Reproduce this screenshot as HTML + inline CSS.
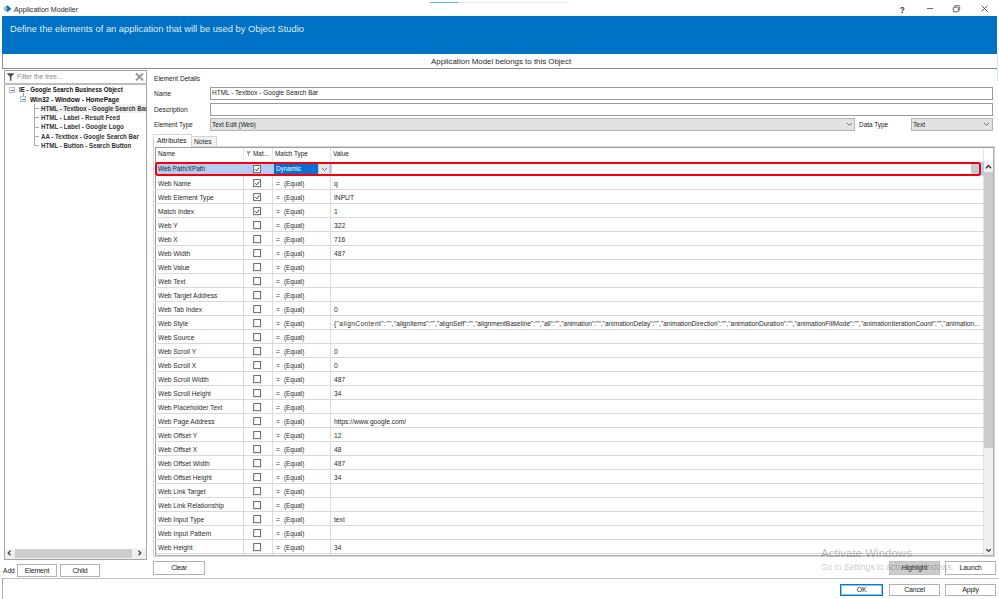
<!DOCTYPE html>
<html><head><meta charset="utf-8"><title>Application Modeller</title>
<style>
*{box-sizing:border-box;margin:0;padding:0}
html,body{width:999px;height:599px;overflow:hidden;background:#fff}
body{position:relative;font-family:"Liberation Sans",sans-serif;font-size:7px;color:#222;line-height:1}
.a{position:absolute;white-space:nowrap}
.t{position:absolute;white-space:nowrap;line-height:10px;height:10px;transform-origin:0 50%;transform:scaleX(var(--s,.94))}
#banner{left:2px;top:16px;width:995px;height:38px;background:#0072c6}
#banner span{position:absolute;left:8px;top:6.6px;font-size:9.6px;color:rgba(255,255,255,.9);line-height:12px;transform-origin:0 50%;transform:scaleX(.972)}
#strip{left:2px;top:54px;width:995px;height:15px;border-left:1px solid #8a8a8a;border-bottom:1px solid #8a8a8a;background:#fff}
.box{position:absolute;border:1px solid #aaa;background:#fff}
.btn{position:absolute;border:1px solid #b2b2b2;background:#fff;text-align:center;font-size:7px;letter-spacing:-.2px;line-height:11px;color:#222}
.row{position:absolute;left:155px;width:829px;height:14px;border-top:1px solid #d9d9d9}
.row span{position:absolute;top:2.5px;line-height:10px;white-space:nowrap;font-size:6.8px;color:#2a2a2a;transform-origin:0 50%;transform:scaleX(.95)}
.row .c1{left:3px;transform:scaleX(.975)}.c3{left:120.7px}.row .c3b{left:128.7px;transform:scaleX(.93)}.row .c4{left:178.7px;transform:scaleX(.98)}
.cb{position:absolute;left:254px;width:7px;height:7px;border:1px solid #555;background:#fff}
.cb svg{position:absolute;left:-1px;top:-1px}
.tree{font-size:7px;font-weight:bold;color:#333}
.tl{position:absolute;background:#999}
</style></head><body>
<!-- title bar -->
<svg class="a" style="left:3px;top:5px" width="9" height="8" viewBox="0 0 9 8"><path d="M0.4 3.7 L1.8 1.2 L4.2 1.2 L4.2 6.3 L1.8 6.3 Z" fill="#8fc0e8"/><path d="M3.2 1.6 L4.6 0.3 L8.4 3.9 L4.6 7 L3.2 5.9 L4.3 3.8 Z" fill="#0a72c4"/></svg>
<div class="t" style="left:14px;top:4.5px;font-size:7.3px;color:#2a2a2a;--s:.975">Application Modeller</div>
<div class="a" style="left:430px;top:2px;width:28px;height:1px;background:#6aa6e0"></div>
<div class="a" style="left:458px;top:2px;width:112px;height:1px;background:#e8e8e8"></div>
<div class="t" style="left:900px;top:5px;font-size:9.5px;font-weight:bold;color:#2a2a2a;--s:.8">?</div>
<div class="a" style="left:927px;top:8px;width:6px;height:1px;background:#6a6a6a"></div>
<svg class="a" style="left:952px;top:5px" width="9" height="8" viewBox="0 0 9 8"><path d="M2.6 2.2 L2.6 1 Q2.6 0.6 3 0.6 L7.2 0.6 Q7.7 0.6 7.7 1.1 L7.7 4.8 Q7.7 5.3 7.2 5.3 L6.4 5.3" fill="none" stroke="#555" stroke-width="0.8"/><rect x="1.3" y="2.2" width="5" height="4.6" rx="0.7" fill="none" stroke="#444" stroke-width="0.85"/></svg>
<svg class="a" style="left:981px;top:5px" width="7" height="7" viewBox="0 0 7 7"><path d="M0.5 0.5 L6.5 6.5 M6.5 0.5 L0.5 6.5" stroke="#444" stroke-width="0.9" fill="none"/></svg>

<div id="banner" class="a"><span>Define the elements of an application that will be used by Object Studio</span></div>
<div id="strip" class="a"></div>
<div class="t" style="left:430.5px;top:56.6px;font-size:7.8px;color:#2a2a2a;--s:1.01">Application Model belongs to this Object</div>

<div class="a" style="left:997px;top:54px;width:1px;height:27px;background:#d4e4f6"></div>
<!-- left panel -->
<div class="box" style="left:4px;top:70px;width:143px;height:14px;border-color:#a4a4a4 #a4a4a4 #bdbdbd #a4a4a4"></div>
<svg class="a" style="left:6px;top:72px" width="10" height="10" viewBox="0 0 10 10"><path d="M0.7 1.2 L8.5 1.2 L5.4 4.8 L5.4 8.8 L3.9 8.8 L3.9 4.8 Z" fill="#505050"/></svg>
<div class="t" style="left:17.3px;top:71.8px;font-size:7px;color:#8a8a8a;--s:.966">Filter the tree...</div>
<svg class="a" style="left:135px;top:72px" width="9" height="9" viewBox="0 0 9 9"><path d="M1 1.3 L8 8.3 M8 1.3 L1 8.3" stroke="#949494" stroke-width="1.9" fill="none"/></svg>
<div class="box" style="left:4px;top:84px;width:143px;height:476px;border-color:#bdbdbd #a4a4a4 #a4a4a4 #a4a4a4"></div>

<div class="a" style="left:40px;top:104px;width:106px;height:9px;background:#f0f0f0"></div>
<div class="box" style="left:9px;top:87px;width:6px;height:6px;border-color:#b4bfce;background:#f6f8fb"></div><div class="a" style="left:11px;top:90px;width:3px;height:1px;background:#5a76c0"></div>
<div class="box" style="left:20px;top:96px;width:6px;height:6px;border-color:#b4bfce;background:#f6f8fb"></div><div class="a" style="left:22px;top:99px;width:3px;height:1px;background:#5a76c0"></div>
<div class="tl" style="left:23px;top:93px;width:1px;height:3px"></div>
<div class="tl" style="left:34px;top:104px;width:1px;height:42px;background:#aaa"></div>
<div class="tl" style="left:34px;top:108px;width:5px;height:1px;background:#aaa"></div>
<div class="tl" style="left:34px;top:117px;width:5px;height:1px;background:#aaa"></div>
<div class="tl" style="left:34px;top:127px;width:5px;height:1px;background:#aaa"></div>
<div class="tl" style="left:34px;top:136px;width:5px;height:1px;background:#aaa"></div>
<div class="tl" style="left:34px;top:145px;width:5px;height:1px;background:#aaa"></div>
<div class="t tree" style="left:19px;top:85px;color:#111;--s:0.871">IE - Google Search Business Object</div>
<div class="t tree" style="left:30px;top:95px;color:#111;--s:0.931">Win32 - Window - HomePage</div>
<div class="t tree" style="left:41px;top:104px;width:120px;overflow:hidden;--s:.88">HTML - Textbox - Google Search Bar</div>
<div class="t tree" style="left:41px;top:113px;--s:0.88">HTML - Label - Result Feed</div>
<div class="t tree" style="left:41px;top:122px;--s:0.889">HTML - Label - Google Logo</div>
<div class="t tree" style="left:41px;top:132px;--s:0.876">AA - Textbox - Google Search Bar</div>
<div class="t tree" style="left:41px;top:141px;--s:0.885">HTML - Button - Search Button</div>

<!-- h scrollbar -->
<div class="a" style="left:5px;top:549px;width:141px;height:10px;background:#f0f0f0"></div>
<div class="a" style="left:15px;top:549px;width:117px;height:9px;background:#cdcdcd"></div>
<svg class="a" style="left:7px;top:550px" width="5" height="6" viewBox="0 0 5 6"><path d="M3.5 0.7 L1.2 3 L3.5 5.3" stroke="#444" stroke-width="1.3" fill="none"/></svg>
<svg class="a" style="left:137px;top:550px" width="5" height="6" viewBox="0 0 5 6"><path d="M1.5 0.7 L3.8 3 L1.5 5.3" stroke="#444" stroke-width="1.3" fill="none"/></svg>

<div class="t" style="left:3.3px;top:566px;font-size:7px">Add</div>
<div class="btn" style="left:17px;top:564px;width:40px;height:13px">Element</div>
<div class="btn" style="left:60px;top:564px;width:40px;height:13px">Child</div>
<div class="a" style="left:2px;top:578px;width:997px;height:1px;background:#c4c4c4"></div>
<div class="a" style="left:2px;top:578px;width:1px;height:21px;background:#aaa"></div>

<!-- right details -->
<div class="t" style="left:154px;top:73.5px;font-size:7px;--s:.939">Element Details</div>
<div class="t" style="left:154px;top:88.7px;font-size:7px;--s:.917">Name</div>
<div class="t" style="left:154px;top:104.5px;font-size:7px;--s:.962">Description</div>
<div class="t" style="left:154px;top:120.3px;font-size:7px;--s:.908">Element Type</div>
<div class="box" style="left:210px;top:87px;width:783px;height:13px;border-color:#9a9a9a"></div>
<div class="t" style="left:212px;top:88px;font-size:7px;--s:.926">HTML - Textbox - Google Search Bar</div>
<div class="box" style="left:210px;top:103px;width:783px;height:13px;border-color:#9a9a9a"></div>
<div class="box" style="left:210px;top:118px;width:645px;height:13px;border-color:#b4b4b4;background:#e2e2e2"></div>
<div class="t" style="left:212px;top:120px;font-size:7px;--s:0.92">Text Edit (Web)</div>
<svg class="a" style="left:846px;top:122px" width="7" height="5" viewBox="0 0 7 5"><path d="M1 1 L3.5 3.4 L6 1" stroke="#505050" stroke-width="0.8" fill="none"/></svg>
<div class="t" style="left:858.5px;top:120px;font-size:7px;--s:.918">Data Type</div>
<div class="box" style="left:911px;top:118px;width:82px;height:13px;border-color:#b4b4b4;background:#e2e2e2"></div>
<div class="t" style="left:913px;top:120px;font-size:7px">Text</div>
<svg class="a" style="left:983px;top:122px" width="7" height="5" viewBox="0 0 7 5"><path d="M1 1 L3.5 3.4 L6 1" stroke="#505050" stroke-width="0.8" fill="none"/></svg>

<!-- tabs -->
<div class="box" style="left:190px;top:136px;width:27px;height:11px;border-color:#d5d5d5;background:#f2f2f2"></div>
<div class="t" style="left:194px;top:137px;font-size:7px;--s:.96">Notes</div>
<div class="box" style="left:153px;top:146px;width:842px;height:411px;border-color:#d5d5d5"></div>
<div class="box" style="left:153px;top:134px;width:39px;height:13px;border-color:#d5d5d5;border-bottom:none"></div>
<div class="t" style="left:157px;top:135.5px;font-size:7px;--s:1">Attributes</div>

<!-- table -->
<div class="box" style="left:155px;top:147px;width:839px;height:409px;border-color:#a0a0a0 #b0b0b0 #b0b0b0 #999"></div>
<div class="t" style="left:158px;top:149px;font-size:6.8px">Name</div>
<svg class="a" style="left:246px;top:151px" width="6" height="6" viewBox="0 0 6 6"><path d="M0.1 0.2 L5.1 0.2 L3 3 L3 5.2 L2.2 5.2 L2.2 3 Z" fill="#9a9a9a"/></svg>
<div class="t" style="left:253px;top:149px;font-size:6.8px">Mat...</div>
<div class="t" style="left:275px;top:149px;font-size:6.8px">Match Type</div>
<div class="t" style="left:333px;top:149px;font-size:6.8px">Value</div>
<div class="a" style="left:243px;top:148px;width:1px;height:13px;background:#e3e3e3"></div>
<div class="a" style="left:272px;top:148px;width:1px;height:13px;background:#e3e3e3"></div>
<div class="a" style="left:330px;top:148px;width:1px;height:13px;background:#e3e3e3"></div>
<!-- col lines -->
<div class="a" style="left:243px;top:162px;width:1px;height:393px;background:#dcdcdc"></div>
<div class="a" style="left:272px;top:162px;width:1px;height:393px;background:#dcdcdc"></div>
<div class="a" style="left:330px;top:162px;width:1px;height:393px;background:#dcdcdc"></div>
<div class="a" style="left:983px;top:148px;width:1px;height:407px;background:#e3e3e3"></div>

<!-- selected row -->
<div class="a" style="left:156px;top:162px;width:176px;height:14px;background:#b4cdf0"></div>
<div class="a" style="left:971px;top:162px;width:13px;height:14px;background:#b4cdf0"></div>
<div class="t" style="left:158px;top:164px;font-size:6.8px">Web Path/XPath</div>
<svg class="a" style="left:253px;top:165px" width="10" height="10" viewBox="0 0 10 10"><rect x="0.7" y="0.6" width="6.9" height="7.1" fill="#fff" stroke="#555" stroke-width="0.9"/><path d="M2.3 4.3 L3.7 5.9 L6.2 2.5" fill="none" stroke="#3a3a3a" stroke-width="1"/></svg>

<div class="a" style="left:274px;top:164px;width:44px;height:10px;background:#0a6fd0"></div>
<div class="t" style="left:276px;top:164px;font-size:6.8px;color:#fff">Dynamic</div>
<div class="a" style="left:319px;top:164px;width:10px;height:11px;background:#e6e6e6"></div><svg class="a" style="left:321px;top:167px" width="7" height="5" viewBox="0 0 7 5"><path d="M1 1 L3.5 3.4 L6 1" stroke="#505050" stroke-width="0.8" fill="none"/></svg>
<div class="a" style="left:972px;top:164px;width:6px;height:10px;background:#ccc"></div>
<div class="t" style="left:974px;top:166px;font-size:4px;color:#555">...</div>
<div class="row" style="top:175px"><span class="c1">Web Name</span><span class="c3">=</span><span class="c3b">(Equal)</span><span class="c4">q</span></div>
<svg class="a" style="left:253px;top:179px" width="10" height="10" viewBox="0 0 10 10"><rect x="0.7" y="0.6" width="6.9" height="7.1" fill="#fff" stroke="#555" stroke-width="0.9"/><path d="M2.3 4.3 L3.7 5.9 L6.2 2.5" fill="none" stroke="#3a3a3a" stroke-width="1"/></svg>
<div class="row" style="top:189px"><span class="c1">Web Element Type</span><span class="c3">=</span><span class="c3b">(Equal)</span><span class="c4">INPUT</span></div>
<svg class="a" style="left:253px;top:193px" width="10" height="10" viewBox="0 0 10 10"><rect x="0.7" y="0.6" width="6.9" height="7.1" fill="#fff" stroke="#555" stroke-width="0.9"/><path d="M2.3 4.3 L3.7 5.9 L6.2 2.5" fill="none" stroke="#3a3a3a" stroke-width="1"/></svg>
<div class="row" style="top:203px"><span class="c1">Match Index</span><span class="c3">=</span><span class="c3b">(Equal)</span><span class="c4">1</span></div>
<svg class="a" style="left:253px;top:207px" width="10" height="10" viewBox="0 0 10 10"><rect x="0.7" y="0.6" width="6.9" height="7.1" fill="#fff" stroke="#555" stroke-width="0.9"/><path d="M2.3 4.3 L3.7 5.9 L6.2 2.5" fill="none" stroke="#3a3a3a" stroke-width="1"/></svg>
<div class="row" style="top:217px"><span class="c1">Web Y</span><span class="c3">=</span><span class="c3b">(Equal)</span><span class="c4">322</span></div>
<svg class="a" style="left:253px;top:221px" width="10" height="10" viewBox="0 0 10 10"><rect x="0.7" y="0.6" width="6.9" height="7.1" fill="#fff" stroke="#555" stroke-width="0.9"/></svg>
<div class="row" style="top:231px"><span class="c1">Web X</span><span class="c3">=</span><span class="c3b">(Equal)</span><span class="c4">716</span></div>
<svg class="a" style="left:253px;top:235px" width="10" height="10" viewBox="0 0 10 10"><rect x="0.7" y="0.6" width="6.9" height="7.1" fill="#fff" stroke="#555" stroke-width="0.9"/></svg>
<div class="row" style="top:245px"><span class="c1">Web Width</span><span class="c3">=</span><span class="c3b">(Equal)</span><span class="c4">487</span></div>
<svg class="a" style="left:253px;top:249px" width="10" height="10" viewBox="0 0 10 10"><rect x="0.7" y="0.6" width="6.9" height="7.1" fill="#fff" stroke="#555" stroke-width="0.9"/></svg>
<div class="row" style="top:259px"><span class="c1">Web Value</span><span class="c3">=</span><span class="c3b">(Equal)</span><span class="c4"></span></div>
<svg class="a" style="left:253px;top:263px" width="10" height="10" viewBox="0 0 10 10"><rect x="0.7" y="0.6" width="6.9" height="7.1" fill="#fff" stroke="#555" stroke-width="0.9"/></svg>
<div class="row" style="top:273px"><span class="c1">Web Text</span><span class="c3">=</span><span class="c3b">(Equal)</span><span class="c4"></span></div>
<svg class="a" style="left:253px;top:277px" width="10" height="10" viewBox="0 0 10 10"><rect x="0.7" y="0.6" width="6.9" height="7.1" fill="#fff" stroke="#555" stroke-width="0.9"/></svg>
<div class="row" style="top:287px"><span class="c1">Web Target Address</span><span class="c3">=</span><span class="c3b">(Equal)</span><span class="c4"></span></div>
<svg class="a" style="left:253px;top:291px" width="10" height="10" viewBox="0 0 10 10"><rect x="0.7" y="0.6" width="6.9" height="7.1" fill="#fff" stroke="#555" stroke-width="0.9"/></svg>
<div class="row" style="top:301px"><span class="c1">Web Tab Index</span><span class="c3">=</span><span class="c3b">(Equal)</span><span class="c4">0</span></div>
<svg class="a" style="left:253px;top:305px" width="10" height="10" viewBox="0 0 10 10"><rect x="0.7" y="0.6" width="6.9" height="7.1" fill="#fff" stroke="#555" stroke-width="0.9"/></svg>
<div class="row" style="top:315px"><span class="c1">Web Style</span><span class="c3">=</span><span class="c3b">(Equal)</span><span class="c4" style="transform:scaleX(.966)"><b style="font-weight:normal;letter-spacing:.43px">{&quot;alignContent&quot;:&quot;&quot;,</b>&quot;alignItems&quot;:&quot;&quot;,&quot;alignSelf&quot;:&quot;&quot;,&quot;alignmentBaseline&quot;:&quot;&quot;,&quot;all&quot;:&quot;&quot;,&quot;animation&quot;:&quot;&quot;,&quot;animationDelay&quot;:&quot;&quot;,&quot;animationDirection&quot;:&quot;&quot;,&quot;animationDuration&quot;:&quot;&quot;,&quot;animationFillMode&quot;:&quot;&quot;,&quot;animationIterationCount&quot;:&quot;&quot;,&quot;animation...</span></div>
<svg class="a" style="left:253px;top:319px" width="10" height="10" viewBox="0 0 10 10"><rect x="0.7" y="0.6" width="6.9" height="7.1" fill="#fff" stroke="#555" stroke-width="0.9"/></svg>
<div class="row" style="top:329px"><span class="c1">Web Source</span><span class="c3">=</span><span class="c3b">(Equal)</span><span class="c4"></span></div>
<svg class="a" style="left:253px;top:333px" width="10" height="10" viewBox="0 0 10 10"><rect x="0.7" y="0.6" width="6.9" height="7.1" fill="#fff" stroke="#555" stroke-width="0.9"/></svg>
<div class="row" style="top:343px"><span class="c1">Web Scroll Y</span><span class="c3">=</span><span class="c3b">(Equal)</span><span class="c4">0</span></div>
<svg class="a" style="left:253px;top:347px" width="10" height="10" viewBox="0 0 10 10"><rect x="0.7" y="0.6" width="6.9" height="7.1" fill="#fff" stroke="#555" stroke-width="0.9"/></svg>
<div class="row" style="top:357px"><span class="c1">Web Scroll X</span><span class="c3">=</span><span class="c3b">(Equal)</span><span class="c4">0</span></div>
<svg class="a" style="left:253px;top:361px" width="10" height="10" viewBox="0 0 10 10"><rect x="0.7" y="0.6" width="6.9" height="7.1" fill="#fff" stroke="#555" stroke-width="0.9"/></svg>
<div class="row" style="top:371px"><span class="c1">Web Scroll Width</span><span class="c3">=</span><span class="c3b">(Equal)</span><span class="c4">487</span></div>
<svg class="a" style="left:253px;top:375px" width="10" height="10" viewBox="0 0 10 10"><rect x="0.7" y="0.6" width="6.9" height="7.1" fill="#fff" stroke="#555" stroke-width="0.9"/></svg>
<div class="row" style="top:385px"><span class="c1">Web Scroll Height</span><span class="c3">=</span><span class="c3b">(Equal)</span><span class="c4">34</span></div>
<svg class="a" style="left:253px;top:389px" width="10" height="10" viewBox="0 0 10 10"><rect x="0.7" y="0.6" width="6.9" height="7.1" fill="#fff" stroke="#555" stroke-width="0.9"/></svg>
<div class="row" style="top:399px"><span class="c1">Web Placeholder Text</span><span class="c3">=</span><span class="c3b">(Equal)</span><span class="c4"></span></div>
<svg class="a" style="left:253px;top:403px" width="10" height="10" viewBox="0 0 10 10"><rect x="0.7" y="0.6" width="6.9" height="7.1" fill="#fff" stroke="#555" stroke-width="0.9"/></svg>
<div class="row" style="top:413px"><span class="c1">Web Page Address</span><span class="c3">=</span><span class="c3b">(Equal)</span><span class="c4">https://www.google.com/</span></div>
<svg class="a" style="left:253px;top:417px" width="10" height="10" viewBox="0 0 10 10"><rect x="0.7" y="0.6" width="6.9" height="7.1" fill="#fff" stroke="#555" stroke-width="0.9"/></svg>
<div class="row" style="top:427px"><span class="c1">Web Offset Y</span><span class="c3">=</span><span class="c3b">(Equal)</span><span class="c4">12</span></div>
<svg class="a" style="left:253px;top:431px" width="10" height="10" viewBox="0 0 10 10"><rect x="0.7" y="0.6" width="6.9" height="7.1" fill="#fff" stroke="#555" stroke-width="0.9"/></svg>
<div class="row" style="top:441px"><span class="c1">Web Offset X</span><span class="c3">=</span><span class="c3b">(Equal)</span><span class="c4">48</span></div>
<svg class="a" style="left:253px;top:445px" width="10" height="10" viewBox="0 0 10 10"><rect x="0.7" y="0.6" width="6.9" height="7.1" fill="#fff" stroke="#555" stroke-width="0.9"/></svg>
<div class="row" style="top:455px"><span class="c1">Web Offset Width</span><span class="c3">=</span><span class="c3b">(Equal)</span><span class="c4">487</span></div>
<svg class="a" style="left:253px;top:459px" width="10" height="10" viewBox="0 0 10 10"><rect x="0.7" y="0.6" width="6.9" height="7.1" fill="#fff" stroke="#555" stroke-width="0.9"/></svg>
<div class="row" style="top:469px"><span class="c1">Web Offset Height</span><span class="c3">=</span><span class="c3b">(Equal)</span><span class="c4">34</span></div>
<svg class="a" style="left:253px;top:473px" width="10" height="10" viewBox="0 0 10 10"><rect x="0.7" y="0.6" width="6.9" height="7.1" fill="#fff" stroke="#555" stroke-width="0.9"/></svg>
<div class="row" style="top:483px"><span class="c1">Web Link Target</span><span class="c3">=</span><span class="c3b">(Equal)</span><span class="c4"></span></div>
<svg class="a" style="left:253px;top:487px" width="10" height="10" viewBox="0 0 10 10"><rect x="0.7" y="0.6" width="6.9" height="7.1" fill="#fff" stroke="#555" stroke-width="0.9"/></svg>
<div class="row" style="top:497px"><span class="c1">Web Link Relationship</span><span class="c3">=</span><span class="c3b">(Equal)</span><span class="c4"></span></div>
<svg class="a" style="left:253px;top:501px" width="10" height="10" viewBox="0 0 10 10"><rect x="0.7" y="0.6" width="6.9" height="7.1" fill="#fff" stroke="#555" stroke-width="0.9"/></svg>
<div class="row" style="top:511px"><span class="c1">Web Input Type</span><span class="c3">=</span><span class="c3b">(Equal)</span><span class="c4">text</span></div>
<svg class="a" style="left:253px;top:515px" width="10" height="10" viewBox="0 0 10 10"><rect x="0.7" y="0.6" width="6.9" height="7.1" fill="#fff" stroke="#555" stroke-width="0.9"/></svg>
<div class="row" style="top:525px"><span class="c1">Web Input Pattern</span><span class="c3">=</span><span class="c3b">(Equal)</span><span class="c4"></span></div>
<svg class="a" style="left:253px;top:529px" width="10" height="10" viewBox="0 0 10 10"><rect x="0.7" y="0.6" width="6.9" height="7.1" fill="#fff" stroke="#555" stroke-width="0.9"/></svg>
<div class="row" style="top:539px"><span class="c1">Web Height</span><span class="c3">=</span><span class="c3b">(Equal)</span><span class="c4">34</span></div>
<svg class="a" style="left:253px;top:543px" width="10" height="10" viewBox="0 0 10 10"><rect x="0.7" y="0.6" width="6.9" height="7.1" fill="#fff" stroke="#555" stroke-width="0.9"/></svg>
<div class="a" style="left:156px;top:553px;width:828px;height:1px;background:#d9d9d9"></div><!-- red highlight -->
<div class="a" style="left:155px;top:162px;width:826px;height:14px;border:2px solid #f4000c;border-radius:3px"></div>
<!-- v scrollbar -->
<div class="a" style="left:984px;top:162px;width:9px;height:393px;background:#f0f0f0"></div>
<div class="a" style="left:984px;top:172px;width:9px;height:276px;background:#cbcbcb"></div>
<svg class="a" style="left:985px;top:164px" width="7" height="5" viewBox="0 0 7 5"><path d="M1 4.2 L3.5 1.6 L6 4.2" stroke="#333" stroke-width="1.4" fill="none"/></svg>
<svg class="a" style="left:985px;top:548px" width="7" height="5" viewBox="0 0 7 5"><path d="M1.2 1.2 L3.5 3.5 L5.8 1.2" stroke="#333" stroke-width="1.2" fill="none"/></svg>


<div class="btn" style="left:153px;top:561px;width:52px;height:14px;line-height:12px">Clear</div>
<div class="btn" style="left:889px;top:561px;width:51px;height:14px;line-height:12px;background:#ccc;border-color:#bfbfbf;color:#3a3a3a">Highlight</div>
<div class="btn" style="left:945px;top:561px;width:51px;height:14px;line-height:12px">Launch</div>
<div class="btn" style="left:840px;top:584px;width:43px;height:12px;line-height:10px;border-color:#0078d7;box-shadow:inset 0 0 0 1px rgba(0,120,215,.45)">OK</div>
<div class="btn" style="left:889px;top:584px;width:51px;height:12px;line-height:10px">Cancel</div>
<div class="btn" style="left:945px;top:584px;width:51px;height:12px;line-height:10px">Apply</div>
<!-- watermark -->
<div class="t" style="left:821px;top:546px;font-size:11.8px;line-height:14px;height:14px;color:rgba(0,0,0,.28);--s:.977">Activate Windows</div>
<div class="t" style="left:821px;top:562px;font-size:8.3px;line-height:11px;height:11px;color:rgba(0,0,0,.26);--s:1.015">Go to Settings to activate Windows.</div>
</body></html>
